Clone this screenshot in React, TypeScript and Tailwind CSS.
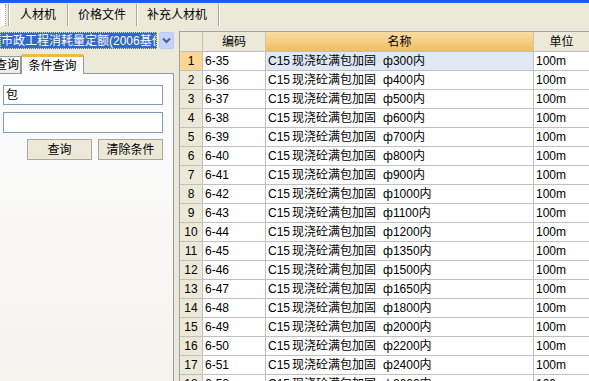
import React from "react"

const rows = [
  ["6-35", "300"],
  ["6-36", "400"],
  ["6-37", "500"],
  ["6-38", "600"],
  ["6-39", "700"],
  ["6-40", "800"],
  ["6-41", "900"],
  ["6-42", "1000"],
  ["6-43", "1100"],
  ["6-44", "1200"],
  ["6-45", "1350"],
  ["6-46", "1500"],
  ["6-47", "1650"],
  ["6-48", "1800"],
  ["6-49", "2000"],
  ["6-50", "2200"],
  ["6-51", "2400"],
  ["6-52", "2600"],
]

function Sep() {
  return (
    <div className="flex h-[22px] shrink-0">
      <div className="w-px bg-[#ACA899]" />
      <div className="w-px bg-white" />
    </div>
  )
}

export default function App() {
  return (
    <div className="w-[589px] h-[381px] overflow-hidden bg-[#ECE9D8] flex flex-col font-['Liberation_Sans','Noto_Sans_CJK_SC',sans-serif] text-[12px] text-black leading-none">
      {/* window edge */}
      <div className="h-[3px] bg-gradient-to-b from-[#0A5CE8] to-[#1D6AE6] shrink-0" />

      {/* toolbar */}
      <div className="h-[24px] flex items-center shrink-0">
        <div className="w-[6px] h-[22px] bg-white border-r border-dotted border-[#9A9A9A]" />
        <div className="w-[2px]" />
        <Sep />
        <div className="pl-[10px] pr-[11px]">人材机</div>
        <Sep />
        <div className="pl-[9px] pr-[10px]">价格文件</div>
        <Sep />
        <div className="pl-[9px] pr-[11px]">补充人材机</div>
        <Sep />
      </div>

      {/* body */}
      <div className="flex flex-1 min-h-0 pt-[4px]">
        {/* left panel */}
        <div className="w-[174px] shrink-0 flex flex-col">
          <div className="mt-[1px] h-[17px] flex items-stretch">
            <div className="w-[157px] bg-[#316AC5] text-white border border-dotted border-[#E8D890] flex items-center overflow-hidden whitespace-nowrap">
              市政工程消耗量定额(2006基价)
            </div>
            <div className="ml-[2px] w-[15px] rounded-[2px] bg-[#C3D3FD] border border-[#B6CAF3] flex items-center justify-center">
              <svg width="9" height="7" viewBox="0 0 9 7">
                <polyline points="1,1.5 4.5,5 8,1.5" fill="none" stroke="#4D6185" strokeWidth="2" />
              </svg>
            </div>
          </div>

          {/* tabs */}
          <div className="mt-[4px] h-[20px] flex items-end relative z-10">
            <div className="w-[21px] h-[17px] bg-gradient-to-b from-white to-[#ECEBE6] border border-l-0 border-b-0 border-[#919B9C] flex items-center justify-end pr-[1px] overflow-hidden whitespace-nowrap">
              查询
            </div>
            <div className="w-[63px] h-[20px] -mb-px bg-[#FCFCFE] border-x border-[#919B9C] border-t-[3px] border-t-[#F5B93A] rounded-t-[2px] flex items-center justify-center">
              条件查询
            </div>
          </div>
          <div className="flex-1 bg-gradient-to-b from-[#FCFCFE] to-[#F4F3EE] border-t border-r border-[#919B9C] pt-[11px] pl-[3px] pr-[10px] flex flex-col">
            <div className="h-[20px] bg-white border border-[#7F9DB9] flex items-center px-[2px]">包</div>
            <div className="mt-[7px] h-[21px] bg-white border border-[#7F9DB9]" />
            <div className="mt-[6px] flex justify-end gap-[6px]">
              <div className="w-[65px] h-[21px] bg-[#ECE9D8] border border-[#ACA899] flex items-center justify-center">查询</div>
              <div className="w-[65px] h-[21px] bg-[#ECE9D8] border border-[#ACA899] flex items-center justify-center">清除条件</div>
            </div>
          </div>
        </div>

        {/* grid */}
        <div className="ml-[5px] flex-1 border-l border-t border-[#9AA3AF] bg-white overflow-hidden">
          <div className="grid grid-cols-[23px_63px_268px_1fr] h-[20px] border-b border-[#C0C0C0]">
            <div className="bg-[#ECE9D8] border-r border-[#C8C5B8]" />
            <div className="bg-[#ECE9D8] border-r border-[#C8C5B8] flex items-center justify-center">编码</div>
            <div className="bg-gradient-to-b from-[#FADDA2] to-[#F0BE5E] border-r border-[#C8C5B8] flex items-center justify-center">名称</div>
            <div className="bg-[#ECE9D8] flex items-center justify-center">单位</div>
          </div>
          {rows.map(([code, d], i) => (
            <div key={code} className="grid grid-cols-[23px_63px_268px_1fr] h-[19px] border-b border-[#C0C0C0]">
              <div className={`${i === 0 ? "bg-[#FFD592]" : "bg-[#ECE9D8]"} border-r border-[#C0C0C0] flex items-center justify-center`}>
                {i + 1}
              </div>
              <div className="border-r border-[#C0C0C0] flex items-center pl-[2px]">{code}</div>
              <div className={`${i === 0 ? "bg-[#DFE8F5]" : ""} border-r border-[#C0C0C0] flex items-center pl-[2px] whitespace-nowrap`}>
                <span className="w-[24px] shrink-0">C15</span>
                <span className="w-[84px] shrink-0">现浇砼满包加固</span>
                <span className="ml-[7px]">ф{d}内</span>
              </div>
              <div className="flex items-center pl-[2px]">100m</div>
            </div>
          ))}
        </div>
      </div>
    </div>
  )
}
